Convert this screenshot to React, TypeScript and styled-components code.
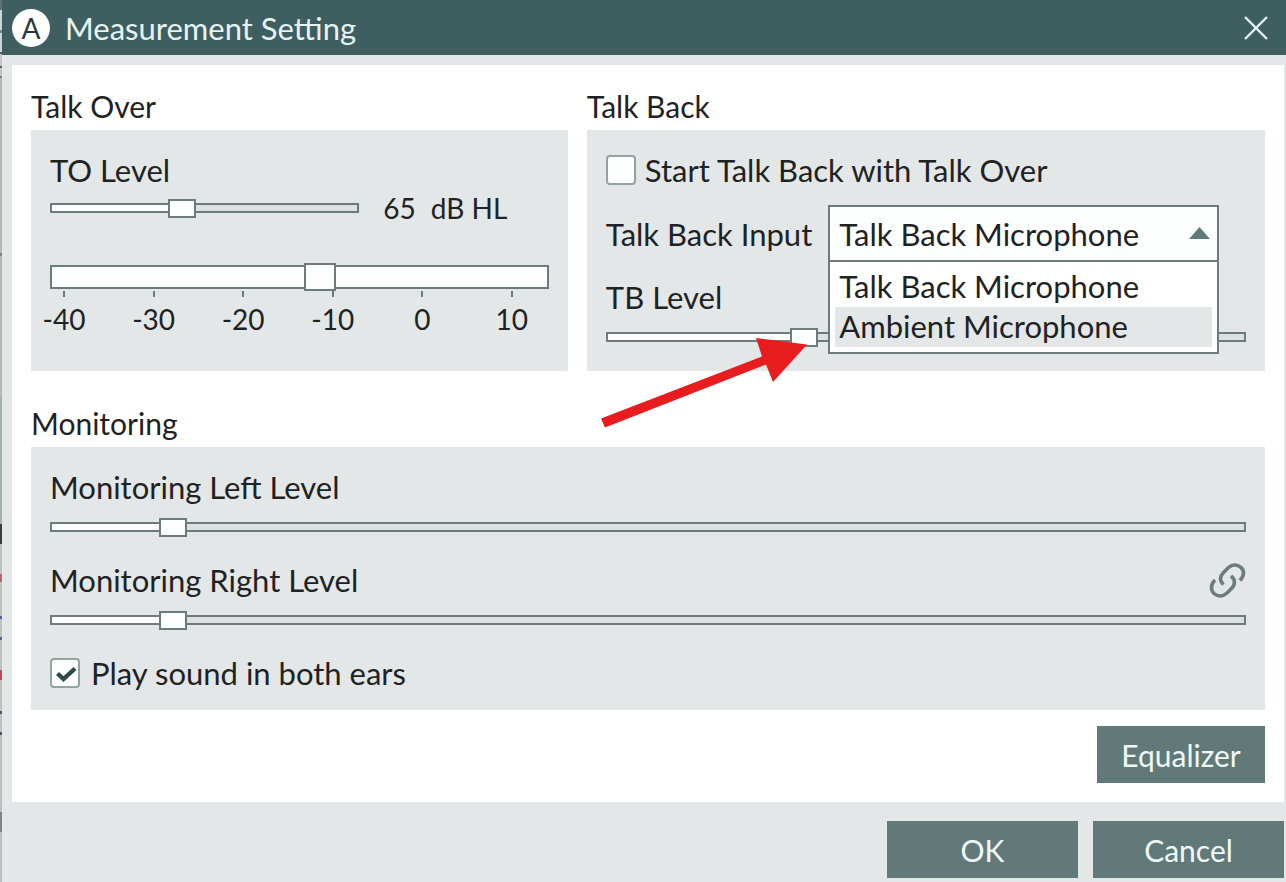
import React, { useId, useState } from "react";
import styled, { createGlobalStyle, css } from "styled-components";

const color = {
  title: "#3f5e5f",
  surface: "#e3e7e7",
  button: "#627979",
  line: "#6d7c7b",
  text: "#1f2223",
  white: "#fdfefe",
};

const size = { text: "31px", heading: "30px", figures: "28px" };

const GlobalStyle = createGlobalStyle`
  *, *::before, *::after { box-sizing: border-box; }
  body {
    margin: 0;
    background: ${color.surface};
    color: ${color.text};
    font-family: "Lato", "Liberation Sans", sans-serif;
    font-size: ${size.text};
    line-height: 36px;
  }
  button, select, input { font: inherit; color: inherit; margin: 0; }
`;

const Screen = styled.div`
  display: flex;
  min-height: 100vh;
`;

/* Sliver of the application window that lies behind the dialog */
const BehindEdge = styled.div`
  flex: none;
  width: 2px;
  background: linear-gradient(
    to bottom,
    #5f7172 0 10px, #c9d6d6 10px 30px, #6d8a8b 30px 33px, #c9d6d6 33px 52px,
    #54595a 52px 54px, #c4c6c6 54px 66px, #5c5f60 66px 68px, #c4c6c6 68px 76px,
    #77797a 76px 78px, #b5b8b8 78px 253px, #7d8080 253px 256px, #b5b8b8 256px 397px,
    #a4b0b0 397px 524px, #3d3d3f 524px 544px, #c0c2c2 544px 574px, #b06a6e 574px 582px,
    #c0c2c2 582px 616px, #5b6496 616px 619px, #c0c2c2 619px 637px, #5b6496 637px 640px,
    #c0c2c2 640px 670px, #bd4a50 670px 680px, #c0c2c2 680px 711px, #4e5468 711px 714px,
    #c0c2c2 714px 732px, #4e5468 732px 735px, #bcbebe 735px 812px, #808383 812px 832px,
    #bcbebe 832px
  );
`;

const Dialog = styled.main`
  flex: 1;
  min-width: 0;
  display: flex;
  flex-direction: column;
  background: ${color.surface};
`;

const TitleBar = styled.header`
  display: flex;
  align-items: center;
  height: 55px;
  padding: 0 16px 0 10px;
  background: ${color.title};
  color: #e6f3f4;
`;

const Logo = styled.span`
  display: flex;
  align-items: center;
  justify-content: center;
  width: 38px;
  height: 38px;
  margin-right: 15px;
  border-radius: 50%;
  background: #fff;
  color: #2c3838;
  font-size: ${size.figures};
`;

const Title = styled.h1`
  flex: 1;
  margin: 0;
  font-size: ${size.text};
  font-weight: 400;
`;

const IconButton = styled.button`
  display: flex;
  padding: 0;
  border: 0;
  background: none;
  color: inherit;
  cursor: pointer;
`;

const Body = styled.div`
  flex: 1;
  margin: 10px 2px 0 10px;
  padding: 23px 19px 19px;
  background: #fff;
`;

const TopRow = styled.div`
  display: grid;
  grid-template-columns: 19fr 24fr;
  gap: 19px;
  margin-bottom: 34px;
`;

const Section = styled.section`
  display: flex;
  flex-direction: column;
`;

const SectionTitle = styled.h2`
  margin: 0 0 6px;
  font-size: ${size.heading};
  font-weight: 400;
`;

const Panel = styled.div<{ $bottom?: number }>`
  position: relative;
  flex: 1;
  display: flex;
  flex-direction: column;
  padding: 22px 19px ${(p) => p.$bottom ?? 19}px;
  background: ${color.surface};
`;

const Row = styled.div<{ $top?: number; $gap?: number; $height?: number }>`
  display: flex;
  align-items: center;
  gap: ${(p) => p.$gap ?? 0}px;
  min-height: ${(p) => p.$height ?? 36}px;
  margin-top: ${(p) => p.$top ?? 0}px;
`;

const FieldLabel = styled.label<{ $grow?: boolean }>`
  white-space: nowrap;
  ${(p) => p.$grow && css`flex: 1;`}
`;

const Reading = styled.output`
  display: flex;
  gap: 15px;
  font-size: ${size.figures};
  white-space: nowrap;
`;

const thumb = css<{ $large?: boolean }>`
  box-sizing: border-box;
  width: ${(p) => (p.$large ? 32 : 28)}px;
  height: ${(p) => (p.$large ? 28 : 19)}px;
  border: 2px solid ${color.line};
  border-radius: 0;
  background: ${color.white};
`;

const track = css<{ $large?: boolean }>`
  box-sizing: border-box;
  height: ${(p) => (p.$large ? 24 : 10)}px;
  border: 2px solid ${color.line};
  background: ${(p) =>
    p.$large
      ? color.white
      : `linear-gradient(to right, ${color.white} var(--fill), #dbe2e1 var(--fill))`};
`;

const Range = styled.input<{ $large?: boolean; $top?: number }>`
  appearance: none;
  display: block;
  flex: none;
  width: 100%;
  height: ${(p) => (p.$large ? 28 : 20)}px;
  margin-top: ${(p) => p.$top ?? 0}px;
  background: none;

  &::-webkit-slider-runnable-track { ${track} }
  &::-webkit-slider-thumb {
    appearance: none;
    ${thumb}
    margin-top: ${(p) => (p.$large ? -4 : -6)}px;
  }
  &::-moz-range-track { ${track} }
  &::-moz-range-thumb { ${thumb} }
`;

const LevelTrack = styled.div`
  flex: none;
  width: 62%;
`;

const Scale = styled.ol`
  display: flex;
  justify-content: space-between;
  margin: 0;
  padding: 0 36px 0 13px;
  font-size: ${size.figures};
  list-style: none;
`;

const Mark = styled.li`
  display: flex;
  flex-direction: column;
  align-items: center;
  gap: 4px;
  width: 2px;
  white-space: nowrap;

  &::before {
    content: "";
    width: 2px;
    height: 6px;
    background: ${color.line};
  }
`;

const CheckBox = styled.span`
  display: grid;
  flex: none;
  width: 30px;
  height: 30px;

  > * { grid-area: 1 / 1; }
  > svg { place-self: center; pointer-events: none; visibility: hidden; }
  > input:checked + svg { visibility: visible; }
`;

const CheckInput = styled.input`
  appearance: none;
  width: 30px;
  height: 30px;
  border: 2px solid #93a3a2;
  border-radius: 4px;
  background: ${color.white};
`;

const Combo = styled.div`
  position: relative;
  flex: 1;
  margin-right: 27px;
`;

const ComboSelect = styled.select`
  appearance: none;
  display: block;
  width: 100%;
  height: 57px;
  padding: 0 40px 0 9px;
  border: 2px solid ${color.line};
  border-radius: 0;
  background: ${color.white};
`;

const ComboArrow = styled.svg`
  position: absolute;
  right: 9px;
  top: 22px;
  pointer-events: none;
`;

const ComboList = styled.ul`
  position: absolute;
  z-index: 1;
  top: 55px;
  left: 0;
  right: 0;
  margin: 0;
  padding: 5px;
  border: 2px solid ${color.line};
  background: #fff;
  list-style: none;
`;

const ComboOption = styled.li<{ $active: boolean }>`
  padding: 1px 4px 3px;
  background: ${(p) => (p.$active ? color.surface : "transparent")};
`;

const Pointer = styled.svg`
  position: absolute;
  z-index: 2;
  left: 8px;
  top: 200px;
  pointer-events: none;
`;

const Actions = styled.div`
  display: flex;
  justify-content: flex-end;
  margin-top: 16px;
`;

const Footer = styled.footer`
  display: flex;
  justify-content: flex-end;
  gap: 15px;
  padding: 19px 2px 4px;
`;

const Button = styled.button<{ $wide?: boolean }>`
  width: ${(p) => (p.$wide ? 191 : 168)}px;
  height: 57px;
  padding: 0;
  border: 0;
  background: ${color.button};
  color: #f0f8f8;
  font-size: ${size.heading};
  cursor: pointer;
`;

type SliderProps = {
  id?: string;
  label?: string;
  initial: number;
  min?: number;
  max?: number;
  large?: boolean;
  top?: number;
};

function Slider({ id, label, initial, min = 0, max = 250, large, top }: SliderProps) {
  const [value, setValue] = useState(initial);
  const fill = `${((value - min) / (max - min)) * 100}%`;
  return (
    <Range
      type="range"
      id={id}
      aria-label={label}
      min={min}
      max={max}
      value={value}
      onChange={(e) => setValue(Number(e.target.value))}
      $large={large}
      $top={top}
      style={{ "--fill": fill } as React.CSSProperties}
    />
  );
}

function Check({ label, initial = false }: { label: string; initial?: boolean }) {
  const id = useId();
  const [on, setOn] = useState(initial);
  return (
    <>
      <CheckBox>
        <CheckInput id={id} type="checkbox" checked={on} onChange={() => setOn(!on)} />
        <svg width="30" height="30" viewBox="0 0 30 30" fill="none">
          <path d="M7.500 15.500 13.500 21 25 10.500" stroke="#2c4a4a" strokeWidth="4.400" />
        </svg>
      </CheckBox>
      <FieldLabel htmlFor={id}>{label}</FieldLabel>
    </>
  );
}

const inputs = ["Talk Back Microphone", "Ambient Microphone"];
const marks = [-40, -30, -20, -10, 0, 10];

export default function App() {
  const [input, setInput] = useState(inputs[0]);

  return (
    <>
      <GlobalStyle />
      <Screen>
        <BehindEdge />
        <Dialog>
          <TitleBar>
            <Logo>A</Logo>
            <Title>Measurement Setting</Title>
            <IconButton type="button" aria-label="Close">
              <svg width="28" height="28" viewBox="0 0 28 28" fill="none" stroke="currentColor" strokeWidth="2.400">
                <path d="M3 3 25 25M25 3 3 25" />
              </svg>
            </IconButton>
          </TitleBar>

          <Body>
            <TopRow>
              <Section>
                <SectionTitle>Talk Over</SectionTitle>
                <Panel $bottom={24}>
                  <FieldLabel htmlFor="to-level">TO Level</FieldLabel>
                  <Row $gap={24} $height={40}>
                    <LevelTrack>
                      <Slider id="to-level" initial={105} />
                    </LevelTrack>
                    <Reading htmlFor="to-level">
                      <span>65</span>
                      <span>dB HL</span>
                    </Reading>
                  </Row>
                  <Slider label="Speech level" initial={136} large top={35} />
                  <Scale>
                    {marks.map((m) => (
                      <Mark key={m}>{m}</Mark>
                    ))}
                  </Scale>
                </Panel>
              </Section>

              <Section>
                <SectionTitle>Talk Back</SectionTitle>
                <Panel $bottom={24}>
                  <Row $gap={9}>
                    <Check label="Start Talk Back with Talk Over" />
                  </Row>
                  <Row $top={17} $gap={16}>
                    <FieldLabel htmlFor="tb-input">Talk Back Input</FieldLabel>
                    <Combo>
                      <ComboSelect id="tb-input" value={input} onChange={(e) => setInput(e.target.value)}>
                        {inputs.map((name) => (
                          <option key={name}>{name}</option>
                        ))}
                      </ComboSelect>
                      <ComboArrow width="21" height="12" viewBox="0 0 21 12">
                        <path d="M10.500 0 21 12H0Z" fill={color.button} />
                      </ComboArrow>
                      <ComboList role="listbox" aria-label="Talk Back Input">
                        {inputs.map((name, i) => (
                          <ComboOption
                            key={name}
                            role="option"
                            aria-selected={name === input}
                            $active={i === 1}
                            onClick={() => setInput(name)}
                          >
                            {name}
                          </ComboOption>
                        ))}
                      </ComboList>
                    </Combo>
                  </Row>
                  <Row $top={17}>
                    <FieldLabel htmlFor="tb-level">TB Level</FieldLabel>
                  </Row>
                  <Slider id="tb-level" initial={75} top={12} />
                  <Pointer width="216" height="100" viewBox="0 0 216 100" fill="#e81c1f">
                    <path d="M6 88.500 167 26.500 161 8 212 14.500 178 52 171 34.500 10 97.500Z" />
                  </Pointer>
                </Panel>
              </Section>
            </TopRow>

            <Section>
              <SectionTitle>Monitoring</SectionTitle>
              <Panel>
                <FieldLabel htmlFor="left-level">Monitoring Left Level</FieldLabel>
                <Slider id="left-level" initial={24} max={260} top={12} />
                <Row $top={25}>
                  <FieldLabel htmlFor="right-level" $grow>
                    Monitoring Right Level
                  </FieldLabel>
                  <IconButton type="button" aria-label="Link left and right levels">
                    <svg width="37" height="36" viewBox="0 0 37 36" fill="none" stroke={color.line} strokeWidth="3.600">
                      <path d="M31 18.500C36 13 35 8 32 5.500C28 2 23 2.500 19.500 5.500L14.500 10.500C10.500 14.500 10.500 19 14.500 22.500" />
                      <path d="M6 18C1.500 22.500 1.500 28 5 31.500C9 35 14 34.500 18 31L22.500 26.500C26.500 22.500 26.500 17.500 22 14" />
                    </svg>
                  </IconButton>
                </Row>
                <Slider id="right-level" initial={24} max={260} top={12} />
                <Row $top={25} $gap={11}>
                  <Check label="Play sound in both ears" initial />
                </Row>
              </Panel>
            </Section>

            <Actions>
              <Button type="button">Equalizer</Button>
            </Actions>
          </Body>

          <Footer>
            <Button type="button" $wide>OK</Button>
            <Button type="button" $wide>Cancel</Button>
          </Footer>
        </Dialog>
      </Screen>
    </>
  );
}
